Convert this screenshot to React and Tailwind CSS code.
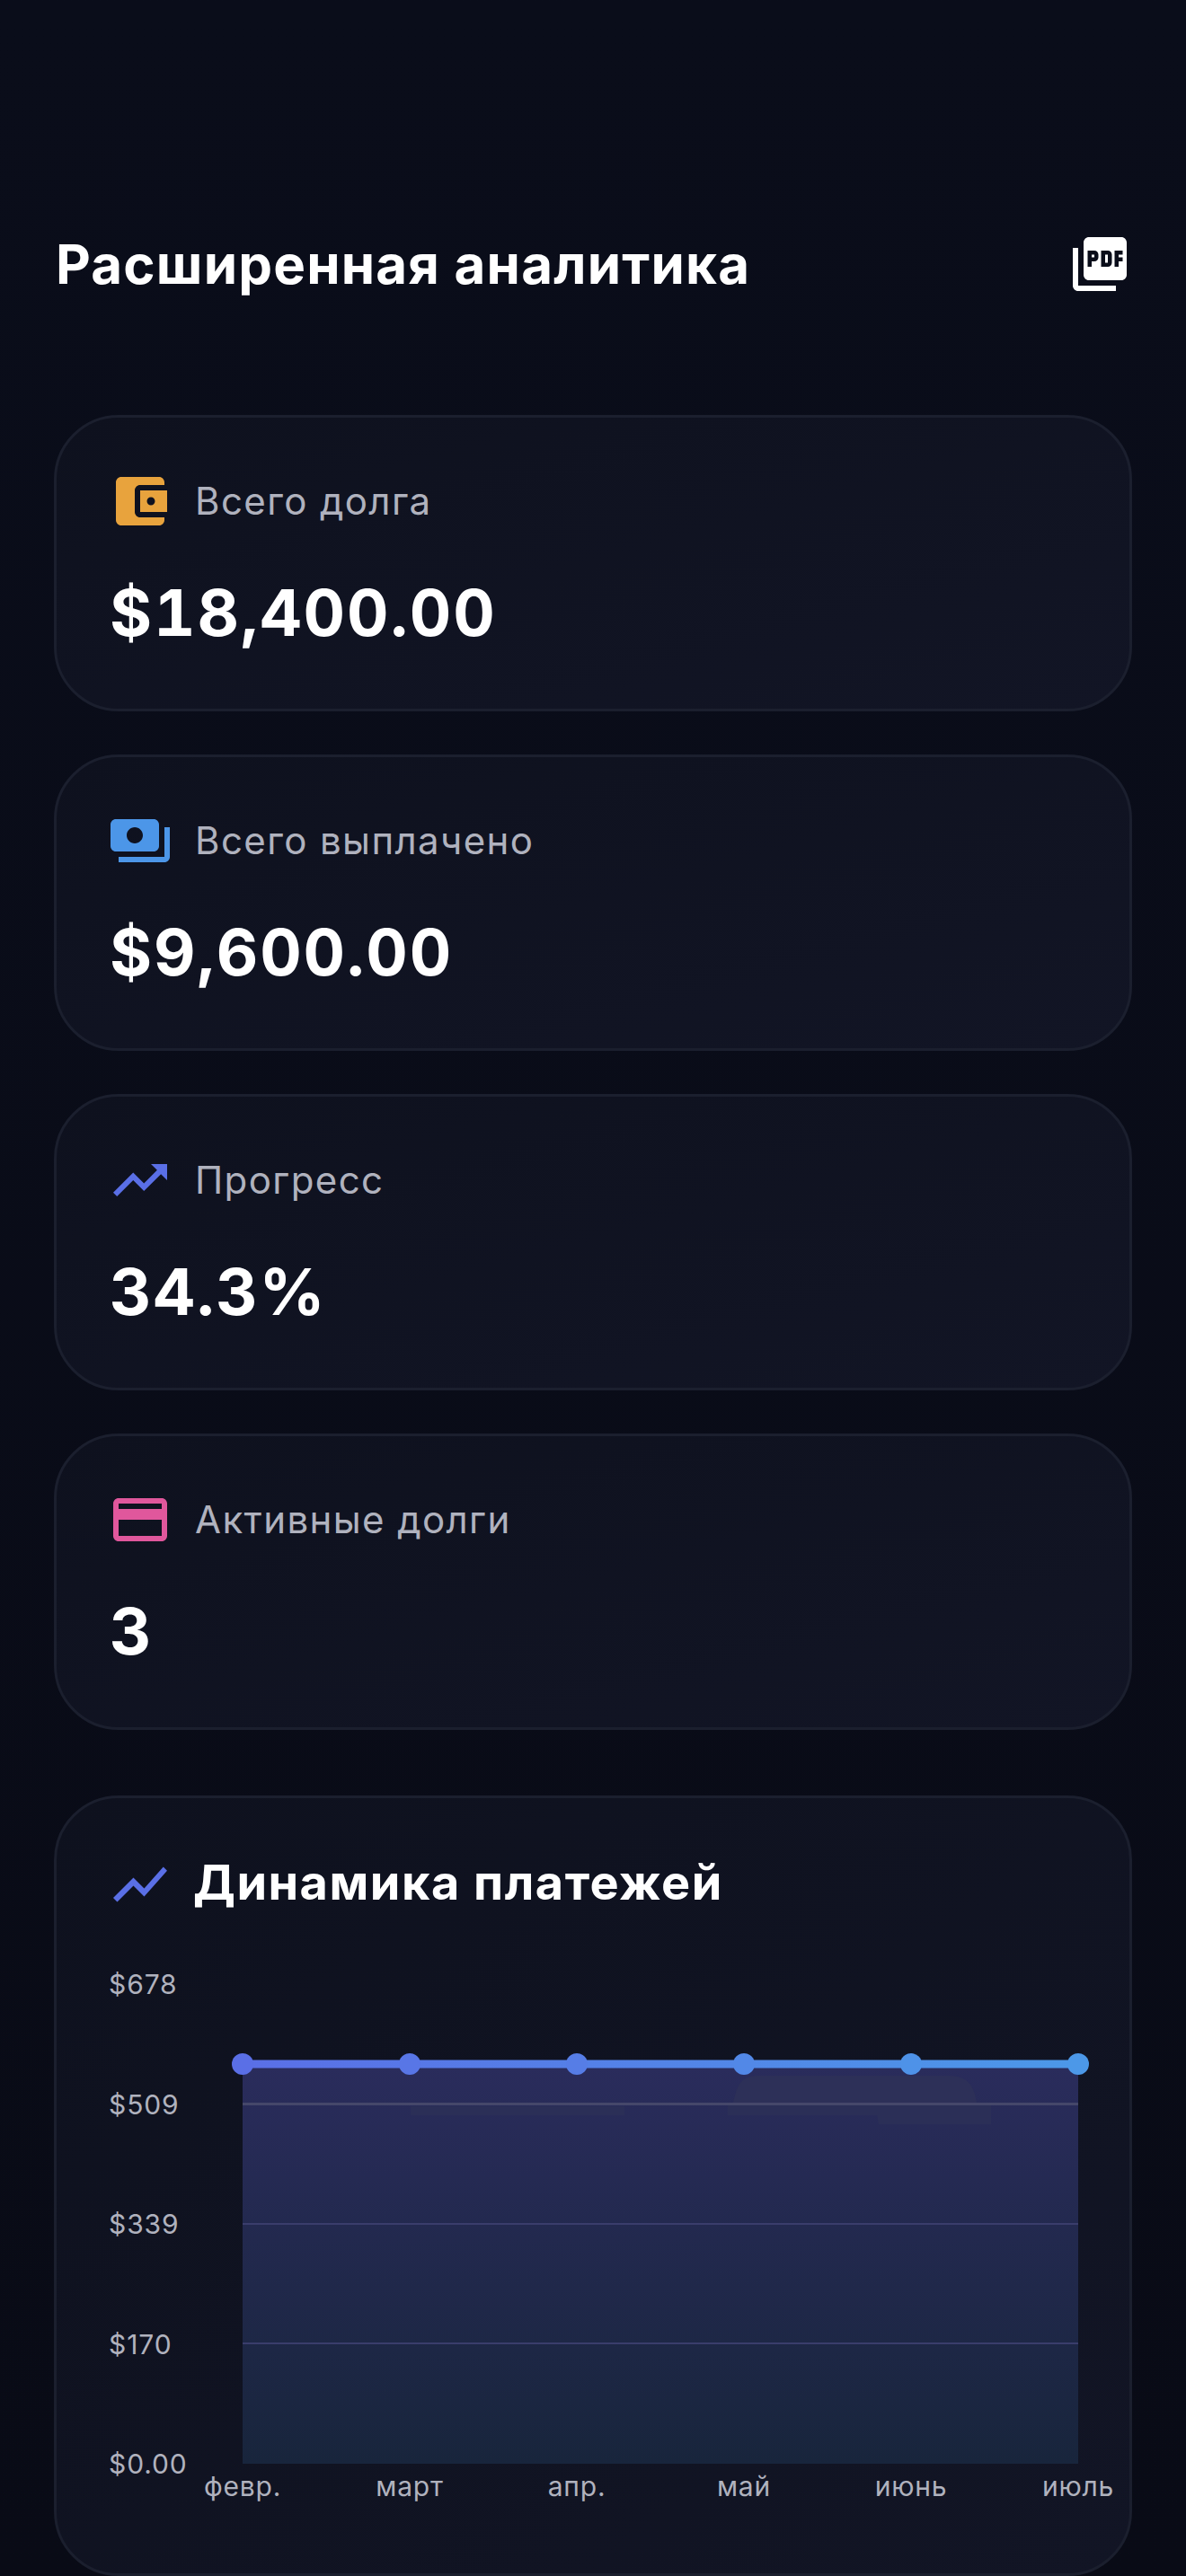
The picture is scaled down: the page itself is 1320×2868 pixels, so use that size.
import React from 'react';

const ICONS = {
  wallet: 'M21 18v1c0 1.1-.9 2-2 2H5c-1.11 0-2-.9-2-2V5c0-1.1.89-2 2-2h14c1.1 0 2 .9 2 2v1h-9c-1.11 0-2 .9-2 2v8c0 1.1.89 2 2 2h9zm-9-2h10V8H12v8zm4-2.5c-.83 0-1.5-.67-1.5-1.5s.67-1.5 1.5-1.5 1.5.67 1.5 1.5-.67 1.5-1.5 1.5z',
  payments: 'M19 14V6c0-1.1-.9-2-2-2H3c-1.1 0-2 .9-2 2v8c0 1.1.9 2 2 2h14c1.1 0 2-.9 2-2zm-9-1c-1.66 0-3-1.34-3-3s1.34-3 3-3 3 1.34 3 3-1.34 3-3 3zm13-6v11c0 1.1-.9 2-2 2H4v-2h17V7h2z',
  trending: 'M16 6l2.29 2.29-4.88 4.88-4-4L2 16.59 3.41 18l6-6 4 4 6.3-6.29L22 12V6z',
  card: 'M20 4H4c-1.11 0-1.99.89-1.99 2L2 18c0 1.11.89 2 2 2h16c1.11 0 2-.89 2-2V6c0-1.11-.89-2-2-2zm0 14H4v-6h16v6zm0-10H4V6h16v2z',
  chart: 'M3.5 18.49l6-6.01 4 4L22 6.92l-1.41-1.41-7.09 7.97-4-4L2 16.99z',
  pdf: 'M20 2H8c-1.1 0-2 .9-2 2v12c0 1.1.9 2 2 2h12c1.1 0 2-.9 2-2V4c0-1.1-.9-2-2-2zm-8.5 7.5c0 .83-.67 1.5-1.5 1.5H9v2H7.5V7H10c.83 0 1.5.67 1.5 1.5v1zm5 2c0 .83-.67 1.5-1.5 1.5h-2.5V7H15c.83 0 1.5.67 1.5 1.5v3zm4-3H19v1h1.5V11H19v2h-1.5V7h3v1.5zM9 9.5h1v-1H9v1zM4 6H2v14c0 1.1.9 2 2 2h14v-2H4V6zm10 5.5h1v-3h-1v3z',
};

const STATS = [
  { icon: 'wallet', color: '#e8a33d', label: 'Всего долга', value: '$18,400.00' },
  { icon: 'payments', color: '#4c96e8', label: 'Всего выплачено', value: '$9,600.00' },
  { icon: 'trending', color: '#5a6fe6', label: 'Прогресс', value: '34.3%' },
  { icon: 'card', color: '#e0579c', label: 'Активные долги', value: '3' },
];

const Y_LABELS = ['$678', '$509', '$339', '$170', '$0.00'];
const X_LABELS = ['февр.', 'март', 'апр.', 'май', 'июнь', 'июль'];
const POINTS = [12, 198, 384, 570, 756, 942];
const DOT_COLORS = ['#5a6fe6', '#5876e6', '#567de6', '#5288e7', '#4e92e8', '#4c98e8'];
const GRID_Y = [148, 282, 415];

function Icon({ name, color }) {
  return (
    <svg width="72" height="72" viewBox="0 0 24 24" fill={color} className="shrink-0">
      <path d={ICONS[name]} />
    </svg>
  );
}

function StatCard({ icon, color, label, value }) {
  return (
    <div className="h-[330px] rounded-[72px] border-[3px] border-[#1b1f2e] bg-gradient-to-br from-[#0e111e] to-[#121525] px-[57px] pt-[57px]">
      <div className="flex items-center gap-[25px]">
        <Icon name={icon} color={color} />
        <span className="text-[42px] leading-[50px] tracking-[1.4px] text-[#b0b2be]">{label}</span>
      </div>
      <div className="mt-[45px] pl-[2px] text-[72px] leading-[86px] font-bold tracking-[1.9px] text-white tabular-nums">{value}</div>
    </div>
  );
}

function PaymentChart() {
  return (
    <svg width="954" height="560" viewBox="0 0 954 560" className="shrink-0">
      <defs>
        <linearGradient id="area" x1="0" y1="0" x2="0" y2="1">
          <stop offset="0" stopColor="#2a2c5c" />
          <stop offset="1" stopColor="#18253c" />
        </linearGradient>
        <linearGradient id="stroke" x1="12" y1="0" x2="942" y2="0" gradientUnits="userSpaceOnUse">
          <stop offset="0" stopColor="#5a6fe6" />
          <stop offset="1" stopColor="#4c98e8" />
        </linearGradient>
      </defs>
      <rect x="12" y="105" width="930" height="445" fill="url(#area)" />
      {GRID_Y.map((y, i) => (
        <rect key={y} x="12" y={y} width="930" height={i === 0 ? 3 : 2} fill={i === 0 ? '#45476a' : '#3a3d6c'} />
      ))}
      {/* faint ghost shapes under the line */}
      <path d="M558 148 C562 130 566 118 585 118 L798 118 C820 118 826 130 829 148 Z" fill="#2d3058" />
      <path d="M552 151 H845 V172 H720 L718 162 H552 Z" fill="#2b2f57" />
      <rect x="199" y="152" width="238" height="10" fill="#2b2f57" />
      <rect x="12" y="100.5" width="930" height="9" fill="url(#stroke)" />
      {POINTS.map((x, i) => (
        <circle key={x} cx={x} cy="105" r="12" fill={DOT_COLORS[i]} />
      ))}
    </svg>
  );
}

export default function App() {
  return (
    <div className="h-[2868px] overflow-hidden bg-gradient-to-b from-[#0a0d1a] to-[#090b16] px-[60px] pt-[258px] font-['Inter',sans-serif]">
      <header className="flex h-[72px] items-center justify-between">
        <h1 className="pl-[2px] text-[60px] leading-[72px] font-bold tracking-[1.2px] text-white">Расширенная аналитика</h1>
        <Icon name="pdf" color="#ffffff" />
      </header>

      <div className="mt-[132px] flex flex-col gap-[48px]">
        {STATS.map((s) => (
          <StatCard key={s.label} {...s} />
        ))}
      </div>

      <section className="mt-[73px] h-[869px] rounded-[72px] border-[3px] border-[#1b1f2e] bg-gradient-to-br from-[#0e111e] to-[#121525] pt-[60px] pl-[57px]">
        <div className="flex items-center gap-[23px]">
          <Icon name="chart" color="#5a6fe6" />
          <h2 className="-mt-[5px] text-[54px] leading-[72px] font-bold tracking-[1.5px] text-white">Динамика платежей</h2>
        </div>

        <div className="mt-[59px] flex">
          <div className="mt-[1px] flex h-[564px] w-[138px] shrink-0 flex-col justify-between pl-[1px] text-[30px] leading-[30px] tracking-[0.9px] text-[#b0b2be]">
            {Y_LABELS.map((l) => (
              <span key={l}>{l}</span>
            ))}
          </div>
          <PaymentChart />
        </div>

        <div className="-mt-[5px] ml-[57px] grid w-[1116px] grid-cols-6 text-center text-[30px] leading-[30px] tracking-[0.8px] text-[#b0b2be]">
          {X_LABELS.map((l) => (
            <span key={l}>{l}</span>
          ))}
        </div>
      </section>
    </div>
  );
}
